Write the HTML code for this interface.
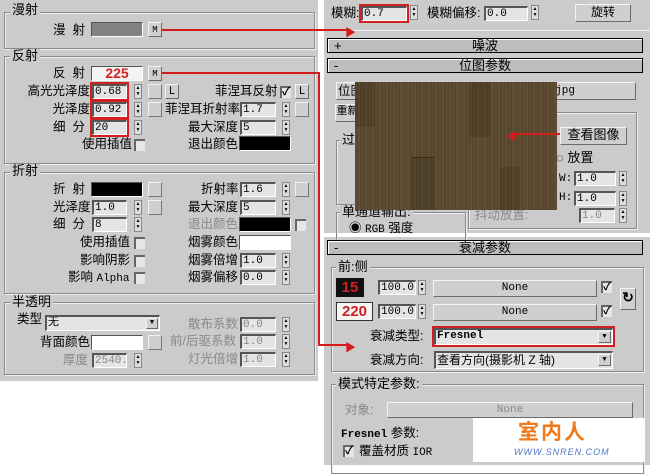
<!DOCTYPE html>
<html><head><meta charset="utf-8"><style>
*{margin:0;padding:0;box-sizing:border-box}
body{width:650px;height:465px;background:#fff;position:relative;overflow:hidden;font-family:"Liberation Sans","Noto Sans CJK SC",sans-serif;font-size:12px;color:#000}
div,span{position:absolute}
.pan{background:#cbcbcb}
.g{border:1px solid #8a8a8a;box-shadow:1px 1px 0 #eee inset,1px 1px 0 #eee}
.gl{background:#cbcbcb;padding:0 2px;font-size:13px;line-height:14px}
.l{white-space:nowrap;line-height:14px;font-size:12.5px}
.r{text-align:right}
.i{height:15px;background:#e4e4e4;border-top:2px solid #555;border-left:2px solid #555;border-bottom:1px solid #fff;border-right:1px solid #fff;font-family:"Liberation Mono",monospace;font-size:11px;line-height:12px;padding-left:1px;white-space:nowrap;overflow:hidden}
.red{outline:2px solid #d21f1f}
.sp{width:8px;height:15px;background:#ddd;border:1px solid #888;font-size:0;text-align:center}
.sp:before{content:"▲\A▼";white-space:pre;font-size:5px;line-height:6px;position:absolute;left:0;top:0;width:6px;text-align:center}
.b{height:15px;width:14px;background:#cfcfcf;border:1px solid;border-color:#f0f0f0 #777 #777 #f0f0f0}
.bt{background:#cfcfcf;border:1px solid;border-color:#f4f4f4 #6a6a6a #6a6a6a #f4f4f4;text-align:center;font-size:11px;line-height:14px;font-family:"Liberation Mono","Noto Sans CJK SC",monospace}
.sw{height:15px;border:1px solid;border-color:#555 #fff #fff #555}
.cb{width:11px;height:12px;background:#e6e6e6;border-top:2px solid #666;border-left:2px solid #666;font-size:11px;line-height:9px;font-weight:bold}
.bar{height:15px;background:#bdbdbd;border:1px solid #000;box-shadow:1px 1px 0 #fff inset;text-align:center;font-size:13px;line-height:13px}
.gr{color:#888}
.rl{background:#d31c1c}
</style></head><body>
<div class="pan" style="left:0;top:0;width:318px;height:381px"></div>
<div class="g" style="left:4px;top:12px;width:311px;height:37px"></div>
<span class="gl" style="left:10px;top:3px">漫射</span>
<span class="l" style="left:53px;top:23px">漫&nbsp;&nbsp;射</span>
<div class="sw" style="left:91px;top:22px;width:52px;background:#828282"></div>
<div class="bt" style="left:148px;top:22px;width:14px;height:15px;font-size:9px">M</div>

<div class="g" style="left:4px;top:56px;width:311px;height:108px"></div>
<span class="gl" style="left:10px;top:49px">反射</span>
<span class="l" style="left:53px;top:66px">反&nbsp;&nbsp;射</span>
<div class="sw" style="left:91px;top:66px;width:52px;background:#f4f4f4;color:#d21f1f;font-weight:bold;font-size:14px;line-height:13px;text-align:center">225</div>
<div class="bt" style="left:148px;top:66px;width:14px;height:15px;font-size:9px">M</div>

<span class="l r" style="left:20px;width:70px;top:84px">高光光泽度</span>
<div class="i red" style="left:92px;top:84px;width:35px">0.68</div>
<div class="sp" style="left:134px;top:84px"></div>
<div class="b" style="left:148px;top:84px"></div>
<div class="bt" style="left:165px;top:84px;width:14px;height:15px">L</div>
<span class="l" style="left:215px;top:84px">菲涅耳反射</span>
<div class="cb" style="left:280px;top:86px">✓</div>
<div class="bt" style="left:295px;top:84px;width:14px;height:15px">L</div>

<span class="l r" style="left:20px;width:70px;top:102px">光泽度</span>
<div class="i red" style="left:92px;top:102px;width:35px">0.92</div>
<div class="sp" style="left:134px;top:102px"></div>
<div class="b" style="left:148px;top:102px"></div>
<span class="l" style="left:165px;top:102px">菲涅耳折射率</span>
<div class="i" style="left:240px;top:102px;width:36px">1.7</div>
<div class="sp" style="left:282px;top:102px"></div>
<div class="b" style="left:295px;top:102px"></div>

<span class="l" style="left:53px;top:120px">细&nbsp;&nbsp;分</span>
<div class="i red" style="left:92px;top:120px;width:35px">20</div>
<div class="sp" style="left:134px;top:120px"></div>
<span class="l" style="left:188px;top:120px">最大深度</span>
<div class="i" style="left:240px;top:120px;width:36px">5</div>
<div class="sp" style="left:282px;top:120px"></div>

<span class="l" style="left:82px;top:137px">使用插值</span>
<div class="cb" style="left:134px;top:139px"></div>
<span class="l" style="left:188px;top:137px">退出颜色</span>
<div class="sw" style="left:239px;top:136px;width:52px;background:#000"></div>

<div class="g" style="left:4px;top:172px;width:311px;height:122px"></div>
<span class="gl" style="left:10px;top:164px">折射</span>
<span class="l" style="left:53px;top:182px">折&nbsp;&nbsp;射</span>
<div class="sw" style="left:91px;top:182px;width:52px;background:#000"></div>
<div class="b" style="left:148px;top:182px"></div>
<span class="l" style="left:201px;top:182px">折射率</span>
<div class="i" style="left:240px;top:182px;width:36px">1.6</div>
<div class="sp" style="left:282px;top:182px"></div>
<div class="b" style="left:295px;top:182px"></div>

<span class="l" style="left:53px;top:200px">光泽度</span>
<div class="i" style="left:92px;top:200px;width:35px">1.0</div>
<div class="sp" style="left:134px;top:200px"></div>
<div class="b" style="left:148px;top:200px"></div>
<span class="l" style="left:188px;top:200px">最大深度</span>
<div class="i" style="left:240px;top:200px;width:36px">5</div>
<div class="sp" style="left:282px;top:200px"></div>

<span class="l" style="left:53px;top:217px">细&nbsp;&nbsp;分</span>
<div class="i" style="left:92px;top:217px;width:35px">8</div>
<div class="sp" style="left:134px;top:217px"></div>
<span class="l gr" style="left:188px;top:217px">退出颜色</span>
<div class="sw" style="left:239px;top:217px;width:52px;background:#000"></div>
<div class="cb" style="left:295px;top:219px"></div>

<span class="l" style="left:80px;top:235px">使用插值</span>
<div class="cb" style="left:134px;top:237px"></div>
<span class="l" style="left:188px;top:235px">烟雾颜色</span>
<div class="sw" style="left:239px;top:235px;width:52px;background:#fff"></div>
<span class="l" style="left:80px;top:253px">影响阴影</span>
<div class="cb" style="left:134px;top:255px"></div>
<span class="l" style="left:188px;top:253px">烟雾倍增</span>
<div class="i" style="left:240px;top:253px;width:36px">1.0</div>
<div class="sp" style="left:282px;top:253px"></div>
<span class="l" style="left:68px;top:270px">影响 <span style="position:static;font-family:'Liberation Mono';font-size:11px">Alpha</span></span>
<div class="cb" style="left:134px;top:272px"></div>
<span class="l" style="left:188px;top:270px">烟雾偏移</span>
<div class="i" style="left:240px;top:270px;width:36px">0.0</div>
<div class="sp" style="left:282px;top:270px"></div>

<div class="g" style="left:4px;top:302px;width:311px;height:73px"></div>
<span class="gl" style="left:10px;top:295px">半透明</span>
<span class="l" style="left:17px;top:312px">类型</span>
<div class="i" style="left:45px;top:315px;width:115px;height:16px">无<div class="bt" style="right:1px;top:1px;width:12px;height:11px;font-size:7px;line-height:9px">▼</div></div>
<span class="l" style="left:40px;top:335px">背面颜色</span>
<div class="sw" style="left:91px;top:335px;width:52px;background:#fff"></div>
<div class="b" style="left:148px;top:335px"></div>
<span class="l gr" style="left:63px;top:353px">厚度</span>
<div class="i gr" style="left:92px;top:353px;width:35px">2540.0</div>
<div class="sp" style="left:134px;top:353px"></div>
<span class="l gr" style="left:188px;top:317px">散布系数</span>
<div class="i gr" style="left:240px;top:317px;width:36px">0.0</div>
<div class="sp" style="left:282px;top:317px"></div>
<span class="l gr" style="left:170px;top:334px">前/后驱系数</span>
<div class="i gr" style="left:240px;top:334px;width:36px">1.0</div>
<div class="sp" style="left:282px;top:334px"></div>
<span class="l gr" style="left:188px;top:352px">灯光倍增</span>
<div class="i gr" style="left:240px;top:352px;width:36px">1.0</div>
<div class="sp" style="left:282px;top:352px"></div>

<div class="pan" style="left:324px;top:0;width:326px;height:233px"></div>
<div class="pan" style="left:324px;top:237px;width:326px;height:228px"></div>
<div style="left:324px;top:30px;width:326px;height:1px;background:#eee"></div>
<span class="l" style="left:331px;top:6px">模糊:</span>
<div class="i red" style="left:361px;top:6px;width:46px">0.7</div>
<div class="sp" style="left:410px;top:5px"></div>
<span class="l" style="left:427px;top:6px">模糊偏移:</span>
<div class="i" style="left:484px;top:6px;width:44px">0.0</div>
<div class="sp" style="left:531px;top:5px"></div>
<div class="bt" style="left:575px;top:4px;width:56px;height:18px;font-size:12px;line-height:16px">旋转</div>

<div class="bar" style="left:327px;top:38px;width:316px"><span style="left:6px;top:0">+</span>噪波</div>
<div class="bar" style="left:327px;top:58px;width:316px"><span style="left:6px;top:0">-</span>位图参数</div>
<div class="bt" style="left:336px;top:82px;width:300px;height:18px;text-align:right;padding-right:60px;line-height:16px">or.jpg</div>
<span class="l" style="left:338px;top:84px">位图</span>
<div class="bt" style="left:335px;top:104px;width:25px;height:18px">重新</div>
<div class="g" style="left:336px;top:140px;width:130px;height:65px"></div>
<span class="gl" style="left:340px;top:133px">过</span>
<div class="g" style="left:336px;top:212px;width:130px;height:30px"></div>
<span class="gl" style="left:340px;top:205px">单通道输出:</span>
<span class="l" style="left:349px;top:221px">◉ <span style="position:static;font-family:'Liberation Mono';font-size:11px">RGB</span> 强度</span>
<div class="g" style="left:468px;top:112px;width:169px;height:117px"></div>
<div class="bt" style="left:560px;top:127px;width:67px;height:18px;font-size:13px;line-height:16px">查看图像</div>
<span class="l" style="left:556px;top:151px;font-size:13px">◌ 放置</span>
<span class="l" style="left:559px;top:172px;font-family:'Liberation Mono';font-size:11px">W:</span>
<div class="i" style="left:574px;top:171px;width:42px">1.0</div>
<div class="sp" style="left:619px;top:171px"></div>
<span class="l" style="left:559px;top:191px;font-family:'Liberation Mono';font-size:11px">H:</span>
<div class="i" style="left:574px;top:191px;width:42px">1.0</div>
<div class="sp" style="left:619px;top:191px"></div>
<span class="l gr" style="left:475px;top:208px">抖动放置:</span>
<div class="i gr" style="left:579px;top:208px;width:36px">1.0</div>
<div class="sp" style="left:619px;top:208px"></div>
<div style="left:355px;top:82px;width:202px;height:128px;background:repeating-linear-gradient(90deg,#5d4c31 0 2px,#54442b 2px 3px,#615038 3px 5px,#58472d 5px 7px)">
<div style="left:0;top:0;width:20px;height:45px;background:rgba(40,30,15,.2)"></div>
<div style="left:115px;top:0;width:20px;height:55px;background:rgba(40,30,15,.25)"></div>
<div style="left:56px;top:75px;width:24px;height:53px;background:rgba(40,30,15,.25);border-top:1px solid #3a2e1a"></div>
<div style="left:145px;top:85px;width:20px;height:43px;background:rgba(40,30,15,.2)"></div>
</div>
<div class="rl" style="left:515px;top:133px;width:45px;height:2px"></div>
<span style="left:506px;top:128px;color:#d31c1c;font-size:11px">◀</span>

<div class="bar" style="left:327px;top:240px;width:316px"><span style="left:6px;top:0">-</span>衰减参数</div>
<div class="g" style="left:331px;top:267px;width:313px;height:105px"></div>
<span class="gl" style="left:336px;top:260px">前:侧</span>
<div style="left:336px;top:278px;width:28px;height:19px;background:#111;color:#d21f1f;font-weight:bold;font-size:15px;line-height:19px;text-align:center">15</div>
<div class="i" style="left:378px;top:280px;width:38px">100.0</div>
<div class="sp" style="left:418px;top:280px"></div>
<div class="bt" style="left:433px;top:280px;width:164px;height:17px;line-height:15px">None</div>
<div class="cb" style="left:601px;top:281px">✓</div>
<div class="bt" style="left:620px;top:288px;width:16px;height:22px;font-size:14px;line-height:20px;font-weight:bold">↻</div>
<div style="left:336px;top:302px;width:37px;height:19px;background:#f5f5f5;border:1px solid #333;color:#d21f1f;font-weight:bold;font-size:15px;line-height:17px;text-align:center">220</div>
<div class="i" style="left:378px;top:304px;width:38px">100.0</div>
<div class="sp" style="left:418px;top:304px"></div>
<div class="bt" style="left:433px;top:304px;width:164px;height:17px;line-height:15px">None</div>
<div class="cb" style="left:601px;top:305px">✓</div>
<span class="l" style="left:370px;top:329px">衰减类型:</span>
<div class="i red" style="left:434px;top:328px;width:179px;height:17px;font-weight:bold;line-height:13px">Fresnel<div class="bt" style="right:1px;top:1px;width:13px;height:12px;font-size:7px;line-height:10px">▼</div></div>
<span class="l" style="left:370px;top:353px">衰减方向:</span>
<div class="i" style="left:434px;top:351px;width:179px;height:18px;font-family:'Liberation Sans','Noto Sans CJK SC',sans-serif;font-size:12px;line-height:14px">查看方向(摄影机 Z 轴)<div class="bt" style="right:1px;top:1px;width:13px;height:12px;font-size:7px;line-height:10px">▼</div></div>

<div class="g" style="left:331px;top:384px;width:313px;height:90px"></div>
<span class="gl" style="left:336px;top:377px">模式特定参数:</span>
<span class="l gr" style="left:345px;top:403px">对象:</span>
<div class="bt gr" style="left:387px;top:402px;width:246px;height:16px">None</div>
<span class="l" style="left:341px;top:426px"><span style="position:static;font-family:'Liberation Mono';font-size:11px;font-weight:bold">Fresnel</span> 参数:</span>
<div class="cb" style="left:343px;top:445px">✓</div>
<span class="l" style="left:359px;top:444px">覆盖材质 <span style="position:static;font-family:'Liberation Mono';font-size:11px">IOR</span></span>
<div style="left:473px;top:418px;width:172px;height:44px;background:#fff"></div>
<span style="left:518px;top:419px;color:#f07a1a;font-size:21px;font-weight:bold;letter-spacing:2px;font-family:'Noto Sans CJK SC',sans-serif;line-height:24px">室内人</span>
<span style="left:514px;top:447px;color:#4a78c8;font-size:9px;font-style:italic;letter-spacing:1px">WWW.SNREN.COM</span>

<div class="rl" style="left:162px;top:29px;width:186px;height:2px"></div>
<span style="left:345px;top:24px;color:#d31c1c;font-size:11px">▶</span>
<div class="rl" style="left:162px;top:72px;width:158px;height:2px"></div>
<div class="rl" style="left:318px;top:72px;width:2px;height:274px"></div>
<div class="rl" style="left:318px;top:344px;width:30px;height:2px"></div>
<span style="left:345px;top:339px;color:#d31c1c;font-size:11px">▶</span>
</body></html>
